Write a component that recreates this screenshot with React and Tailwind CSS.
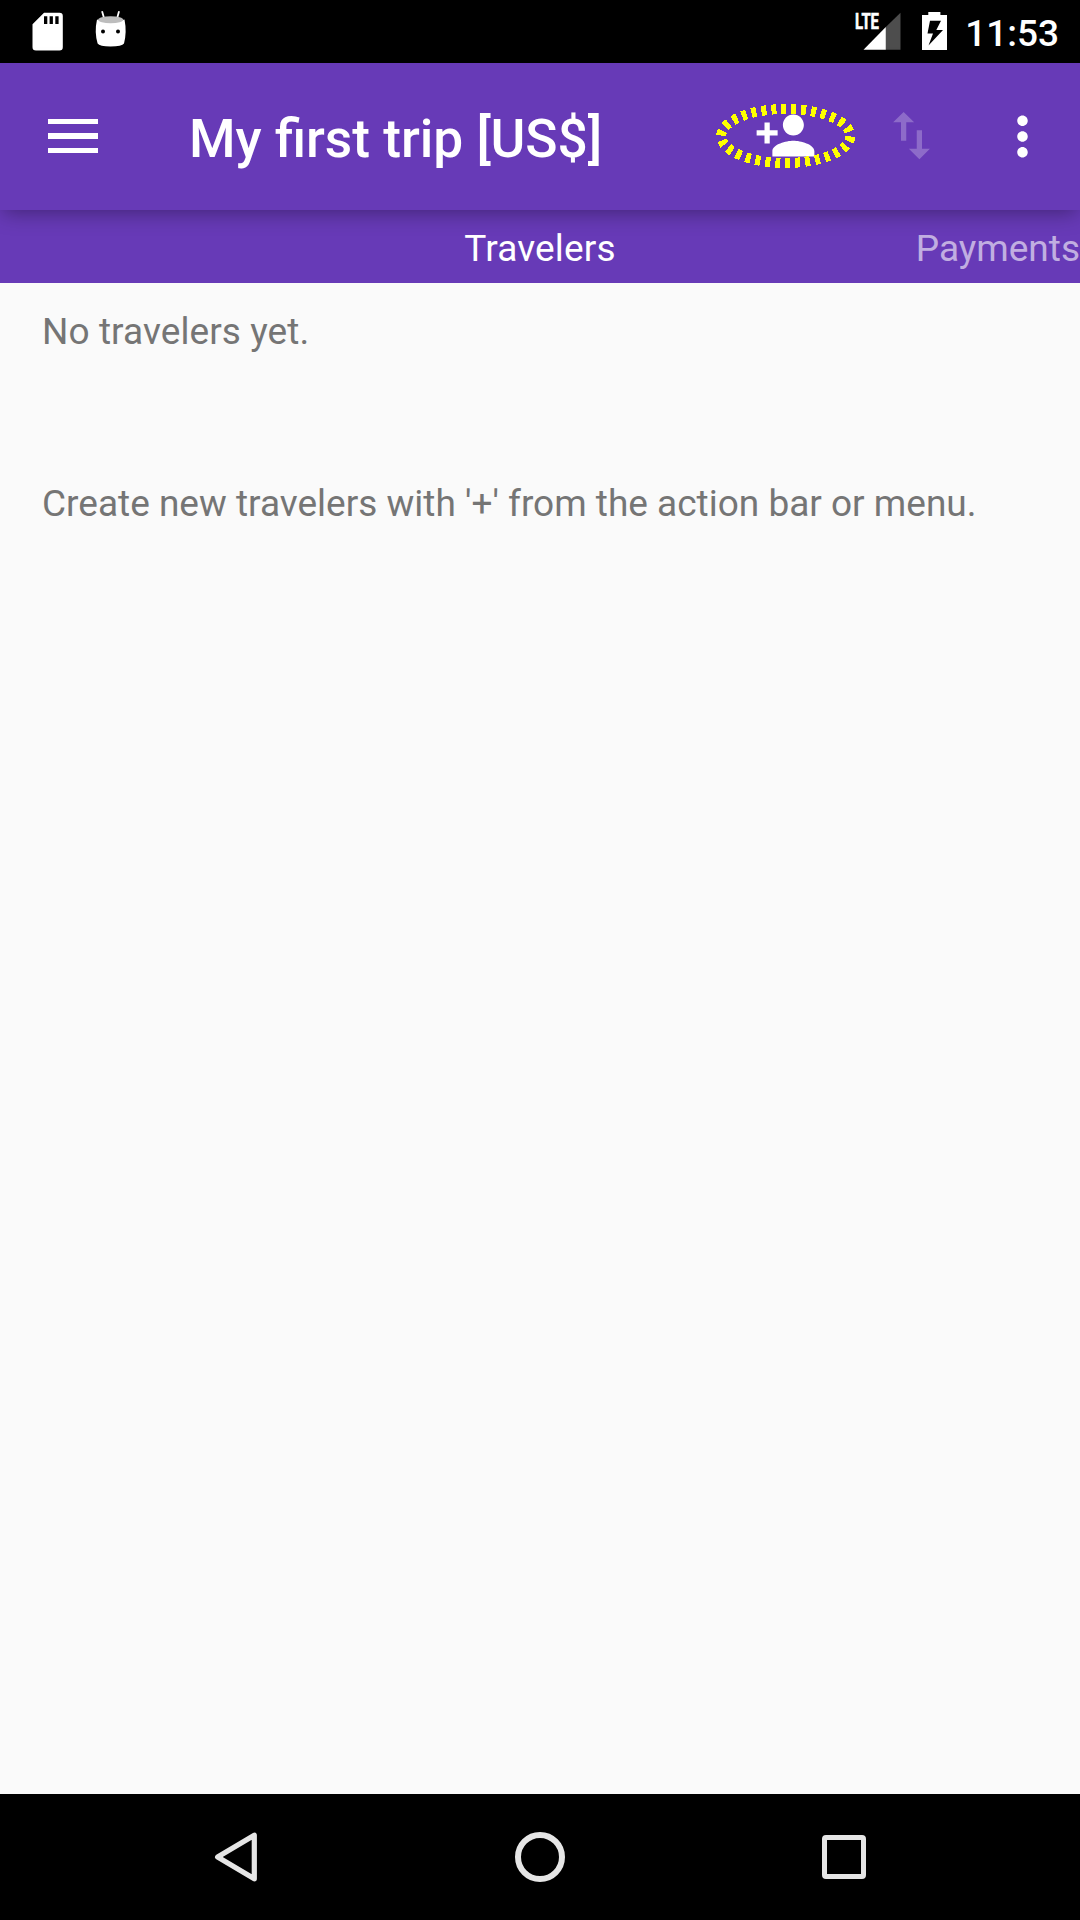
import React from "react";
import { MdPersonAdd, MdSwapVert, MdMoreVert } from "react-icons/md";

function StatusBar() {
  return (
    <div className="flex h-[63px] items-start justify-between bg-black pl-[32px] pr-[21px] text-white">
      <div className="flex">
        <svg className="mt-[12px] h-[40px] w-[32px]" viewBox="0 0 32 40">
          <path
            fill="#fff"
            fillRule="evenodd"
            d="M12 .8H27.5Q30.8 .8 30.8 4V35.2Q30.8 38.5 27.5 38.5H4Q.5 38.5 .5 35.2V12.3ZM12 4.3V12H15.3V4.3ZM17.6 4.3V12H20.9V4.3ZM23.3 4.3V12H26.6V4.3Z"
          />
        </svg>
        <svg className="ml-[30px] mt-[10px] h-[38px] w-[34px]" viewBox="0 0 34 38">
          <path d="M8.200 1.800 10 8M24.900 1.800 23.200 8" stroke="#fff" strokeWidth="1.800" strokeLinecap="round" />
          <path d="M3 9.500Q16.500 15 30.500 9.500Q33 22 30 33.500Q28 36.500 16.500 36.500Q5.500 36.500 3.600 33.500Q.2 22 3 9.500Z" fill="#fff" />
          <ellipse cx="16.700" cy="9.800" rx="12.600" ry="3.500" fill="#bdbdbd" />
          <circle cx="9" cy="21.500" r="2" />
          <circle cx="24" cy="21.500" r="2" />
        </svg>
      </div>
      <div className="flex">
        <svg className="mt-[4px] h-[48px] w-[48px]" viewBox="0 -8 48 48">
          <path d="M31.800 15V37.700H46.500V.7Z" fill="#4d4d4d" />
          <path d="M31.800 15V37.700H9.500Z" fill="#fff" />
          <text
            x="1"
            y="17"
            fill="#fff"
            stroke="#fff"
            strokeWidth=".6"
            fontFamily="Roboto, sans-serif"
            fontWeight="700"
            fontSize="21.500"
            textLength="24"
            lengthAdjust="spacingAndGlyphs"
          >
            LTE
          </text>
        </svg>
        <svg className="ml-[20px] mt-[12px] h-[39px] w-[25px]" viewBox="0 0 25 39">
          <path d="M6.300 0H18.400V3H25V38H0V3H6.300Z" fill="#fff" />
          <path d="M8 8.800H19L14.300 18H21L6.500 33.500 11 21.500H5.500Z" />
        </svg>
        <span className="ml-[18px] mt-[12px] text-[37px] leading-[43px] font-medium">11:53</span>
      </div>
    </div>
  );
}

function Toolbar() {
  return (
    <header className="relative z-10 flex h-[147px] items-center bg-[#673ab7] pr-[26px] pb-[2px] text-white shadow-[0_5px_20px_-3px_rgba(0,0,0,0.38)]">
      <button aria-label="Menu" className="ml-[48px] mt-px flex w-[50px] flex-col gap-[9px]">
        <span className="h-[5.250px] w-full bg-white" />
        <span className="h-[5.250px] w-full bg-white" />
        <span className="h-[5.250px] w-full bg-white" />
      </button>
      <h1 className="ml-[91px] mt-[6px] flex-1 whitespace-nowrap text-[53.250px] leading-[62px] font-medium">
        My first trip [US$]
      </h1>
      <button aria-label="Add traveler" className="relative size-[63px]">
        <MdPersonAdd className="size-[63px]" />
        <svg className="absolute -left-[39px] -top-[1px] h-[66px] w-[142px]" viewBox="0 0 142 66">
          <ellipse
            cx="70.700"
            cy="33"
            rx="64.500"
            ry="27"
            fill="none"
            stroke="#ffff00"
            strokeWidth="10"
            pathLength="300"
            strokeDasharray="5 5"
            strokeDashoffset="-0.5"
            shapeRendering="crispEdges"
          />
        </svg>
      </button>
      <MdSwapVert className="ml-[63px] size-[63px] text-white/25" />
      <MdMoreVert className="ml-[48px] mt-[2px] size-[63px]" />
    </header>
  );
}

function Tabs() {
  return (
    <nav className="grid h-[73px] grid-cols-3 items-start bg-[#673ab7] pt-[17px] text-[37px] leading-[43px]">
      <span className="col-start-2 text-center tracking-[0.15px] text-white">Travelers</span>
      <span className="text-right text-white/60">Payments</span>
    </nav>
  );
}

function NavigationBar() {
  return (
    <footer className="flex h-[126px] items-center justify-center bg-black">
      <div className="flex w-[304px] justify-center">
        <svg className="size-[50px]" viewBox="0 0 50 50" fill="none" stroke="#e6e6e6">
          <path d="M43.300 3.200V46.800L6.600 25Z" strokeWidth="5.200" strokeLinejoin="round" />
        </svg>
      </div>
      <div className="flex w-[304px] justify-center">
        <span className="size-[50px] rounded-full border-[6px] border-[#e6e6e6]" />
      </div>
      <div className="flex w-[304px] justify-center">
        <span className="size-[44px] rounded-[4px] border-[5px] border-[#e6e6e6]" />
      </div>
    </footer>
  );
}

export default function App() {
  return (
    <div className="flex h-[1920px] w-[1080px] flex-col overflow-hidden bg-[#fafafa] font-['Roboto',sans-serif]">
      <StatusBar />
      <Toolbar />
      <Tabs />
      <main className="flex-1 px-[42px] pt-[27px] text-[37px] leading-[43px] text-[#757575]">
        <p className="tracking-[0.08px]">No travelers yet.</p>
        <p className="mt-[129px]">Create new travelers with '+' from the action bar or menu.</p>
      </main>
      <NavigationBar />
    </div>
  );
}
